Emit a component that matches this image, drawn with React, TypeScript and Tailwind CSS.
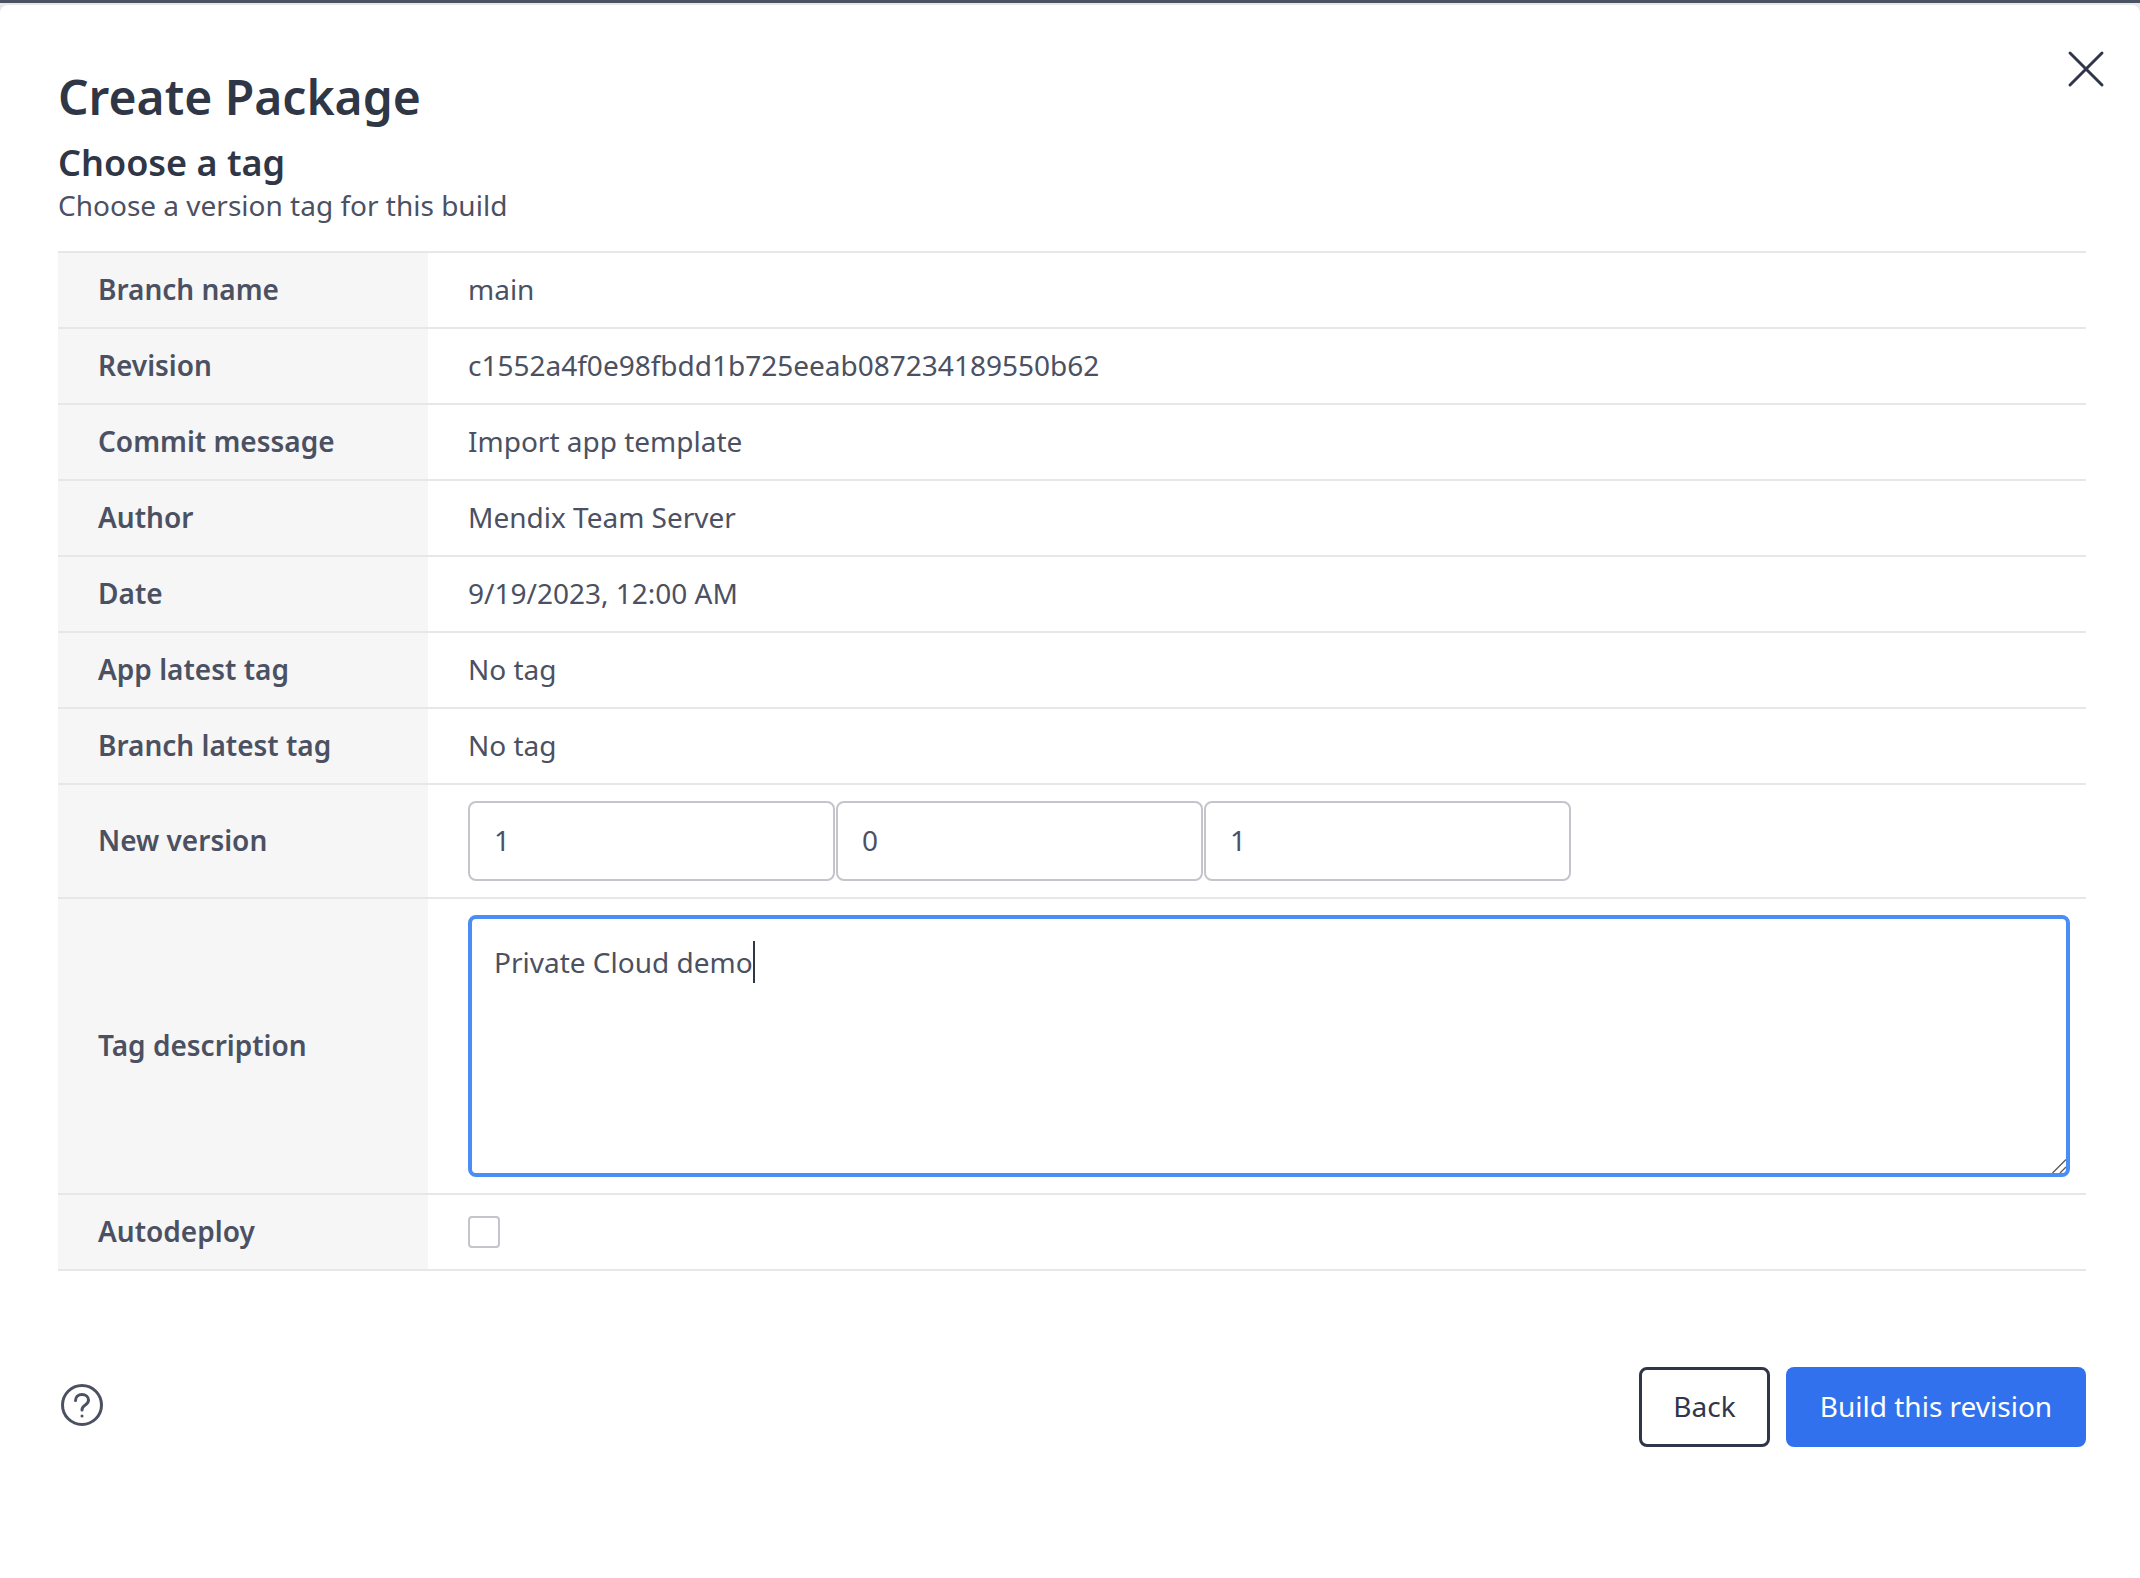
import { X } from "lucide-react";

const font = { fontFamily: '"Noto Sans", sans-serif' };

function Row({ label, children, height = "h-[76px]" }: { label: string; children: React.ReactNode; height?: string }) {
  return (
    <div className={`flex border-t-2 border-[#e7e7e7] ${height}`}>
      <div className="w-[370px] shrink-0 bg-[#f6f6f6] pl-[40px] pb-[2px] flex items-center font-semibold text-[#4b5162]">{label}</div>
      <div className="flex-1 pl-[40px] flex items-center text-[#4b5162]">{children}</div>
    </div>
  );
}

function VersionInput({ value }: { value: string }) {
  return (
    <input
      readOnly
      value={value}
      className="w-[367px] h-[80px] border-2 border-[#c4c5cb] rounded-[8px] pl-[24px] pb-[2px] outline-none text-[#4b5162] bg-white"
    />
  );
}

export default function App() {
  return (
    <div className="min-h-[1578px] bg-white text-[28px]" style={font}>
      <div className="h-[3px] bg-[#4b5262]" />
      <div className="bg-[#e8e8e8] pt-[2px]">
        <div className="relative bg-white rounded-t-[8px] pl-[58px] pr-[54px] pt-[60px] pb-[130px]">
          <button className="absolute top-[32px] right-[22px] text-[#30364a]">
            <X className="w-[64px] h-[64px]" strokeWidth={1.1} />
          </button>

          <h1 className="text-[48px] leading-[64px] font-semibold text-[#2f3646]">Create Package</h1>
          <h2 className="mt-[13px] text-[36px] leading-[42px] font-semibold text-[#2f3646]">Choose a tag</h2>
          <p className="mt-[1px] leading-[40px] text-[#4b5162]">Choose a version tag for this build</p>

          <div className="mt-[26px] border-b-2 border-[#e7e7e7]">
            <Row label="Branch name"><span className="-mt-[2px]">main</span></Row>
            <Row label="Revision"><span className="-mt-[2px]">c1552a4f0e98fbdd1b725eeab087234189550b62</span></Row>
            <Row label="Commit message"><span className="-mt-[2px]">Import app template</span></Row>
            <Row label="Author"><span className="-mt-[2px]">Mendix Team Server</span></Row>
            <Row label="Date"><span className="-mt-[2px]">9/19/2023, 12:00 AM</span></Row>
            <Row label="App latest tag"><span className="-mt-[2px]">No tag</span></Row>
            <Row label="Branch latest tag"><span className="-mt-[2px]">No tag</span></Row>
            <Row label="New version" height="h-[114px]">
              <div className="flex gap-[1px]">
                <VersionInput value="1" />
                <VersionInput value="0" />
                <VersionInput value="1" />
              </div>
            </Row>
            <Row label="Tag description" height="h-[296px]">
              <div className="relative w-[1602px] h-[262px]">
                <textarea
                  readOnly
                  defaultValue="Private Cloud demo"
                  className="block w-full h-full resize-none border-4 border-[#4a8df5] rounded-[8px] pl-[22px] pt-[22px] leading-[42px] outline-none text-[#4b5162]"
                />
                <div className="absolute inset-0 pl-[26px] pt-[26px] leading-[42px] pointer-events-none">
                  <span className="invisible">Private Cloud demo</span>
                  <span className="inline-block w-[2px] h-[42px] bg-[#2f3646] align-top" />
                </div>
                <svg className="absolute bottom-[4px] right-[4px] w-[14px] h-[14px]" viewBox="0 0 14 14" fill="none" stroke="#5c5c5c" strokeWidth="1.4">
                  <path d="M14 0.5 0.5 14M14 8 8 14" />
                </svg>
              </div>
            </Row>
            <Row label="Autodeploy">
              <input type="checkbox" className="appearance-none w-[32px] h-[32px] border-2 border-[#c4c5cb] rounded-[4px] bg-white" />
            </Row>
          </div>

          <div className="mt-[96px] flex items-center justify-between">
            <svg className="ml-[3px] mb-[4px] w-[42px] h-[42px] text-[#4b5162]" viewBox="0 0 42 42" fill="none" stroke="currentColor" strokeWidth="3" strokeLinecap="round">
              <circle cx="21" cy="21" r="19.5" />
              <path d="M14.5 16.5c0-3.6 2.9-6 6.5-6s6.5 2.4 6.5 5.6c0 2.6-1.6 4-3.5 5.2-1.9 1.2-3 2.3-3 4.7" />
              <circle cx="21" cy="32" r="1.5" fill="currentColor" stroke="none" />
            </svg>
            <div className="flex gap-[16px]">
              <button className="w-[131px] h-[80px] border-[3px] border-[#30364a] rounded-[8px] pb-[2px] text-[#30364a] bg-white">Back</button>
              <button className="w-[300px] h-[80px] rounded-[8px] pb-[2px] bg-[#3271ee] text-white">Build this revision</button>
            </div>
          </div>
        </div>
      </div>
    </div>
  );
}
